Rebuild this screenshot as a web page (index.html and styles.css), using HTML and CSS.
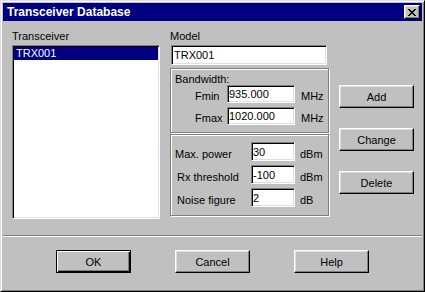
FILE: index.html
```html
<!DOCTYPE html>
<html lang="en">
<head>
    <meta charset="UTF-8">
    <meta name="viewport" content="width=device-width, initial-scale=1.0">
    <title>Transceiver Database</title>
    <link rel="stylesheet" href="styles.css">
</head>
<body>
    <div class="janela">
        <div class="titulo">
            <span>Transceiver Database</span>
            <button class="fechar">
                <svg width="8" height="7" viewBox="0 0 8 7" shape-rendering="crispEdges"><path d="M0 0h2v1H0zM6 0h2v1H6zM1 1h2v1H1zM5 1h2v1H5zM2 2h4v1H2zM3 3h2v1H3zM2 4h4v1H2zM1 5h2v1H1zM5 5h2v1H5zM0 6h2v1H0zM6 6h2v1H6z" fill="#000"/></svg>
            </button>
        </div>

        <div class="conteudo">
            <!-- lista da esquerda -->
            <div class="col-lista">
                <span class="rotulo">Transceiver</span>
                <ul class="lista">
                    <li class="selecionado">TRX001</li>
                </ul>
            </div>

            <!-- dados do modelo -->
            <div class="col-dados">
                <span class="rotulo">Model</span>
                <input type="text" class="campo modelo" value="TRX001">

                <div class="grupo banda">
                    <span class="titulo-grupo">Bandwidth:</span>
                    <div class="linha">
                        <span class="nome">Fmin</span>
                        <input type="text" class="campo" value="935.000">
                        <span class="unidade">MHz</span>
                    </div>
                    <div class="linha">
                        <span class="nome">Fmax</span>
                        <input type="text" class="campo" value="1020.000">
                        <span class="unidade">MHz</span>
                    </div>
                </div>

                <div class="grupo potencia">
                    <div class="linha">
                        <span class="nome">Max. power</span>
                        <input type="text" class="campo" value="30">
                        <span class="unidade">dBm</span>
                    </div>
                    <div class="linha">
                        <span class="nome recuo">Rx threshold</span>
                        <input type="text" class="campo" value="-100">
                        <span class="unidade">dBm</span>
                    </div>
                    <div class="linha">
                        <span class="nome recuo">Noise figure</span>
                        <input type="text" class="campo" value="2">
                        <span class="unidade">dB</span>
                    </div>
                </div>
            </div>

            <!-- botoes laterais -->
            <div class="col-botoes">
                <button class="botao">Add</button>
                <button class="botao">Change</button>
                <button class="botao">Delete</button>
            </div>
        </div>

        <div class="separador"></div>

        <div class="rodape">
            <button class="botao padrao">OK</button>
            <button class="botao">Cancel</button>
            <button class="botao">Help</button>
        </div>
    </div>
</body>
</html>
```

FILE: styles.css
```css
* {
    padding: 0;
    margin: 0;
    box-sizing: border-box;
    font-family: 'Liberation Sans', Arial, Helvetica, sans-serif;
}

body {
    background: #c0c0c0;
    font-size: 11px;
    color: #000;
}

/* Janela */
.janela {
    width: 425px;
    height: 292px;
    padding: 2px;
    background: #c0c0c0;
    border: 1px solid;
    border-color: #dfdfdf #000 #000 #dfdfdf;
    box-shadow: inset 1px 1px #fff, inset -1px -1px #808080;
}

.titulo {
    height: 18px;
    display: flex;
    align-items: center;
    justify-content: space-between;
    padding: 0 2px 0 4px;
    background: #000080;
    color: #fff;
}

.titulo span {
    font-size: 12px;
    font-weight: bold;
    line-height: 18px;
}

.fechar {
    width: 16px;
    height: 14px;
    display: flex;
    align-items: center;
    justify-content: center;
    background: #c0c0c0;
    border: 1px solid;
    border-color: #fff #000 #000 #fff;
    box-shadow: inset -1px -1px #808080, inset 1px 1px #dfdfdf;
}

/* Conteudo */
.conteudo {
    height: 214px;
    display: flex;
    padding: 9px 0 0 9px;
}

.rotulo {
    display: block;
    height: 15px;
    line-height: 13px;
}

.col-lista {
    width: 148px;
}

.lista {
    height: 174px;
    padding: 1px;
    list-style: none;
    background: #fff;
    border: 1px solid;
    border-color: #808080 #fff #fff #808080;
    box-shadow: inset 1px 1px #000, inset -1px -1px #dfdfdf;
}

.lista li {
    height: 13px;
    line-height: 13px;
    padding-left: 2px;
}

.lista .selecionado {
    background: #000080;
    color: #fff;
}

.col-dados {
    width: 159px;
    margin-left: 10px;
}

.campo {
    display: block;
    height: 18px;
    padding: 0 1px;
    font-size: 11px;
    background: #fff;
    border: 1px solid;
    border-color: #808080 #fff #fff #808080;
    box-shadow: inset 1px 1px #000, inset -1px -1px #dfdfdf;
    outline: none;
}

.campo.modelo {
    width: 156px;
    height: 20px;
    margin-left: 1px;
    padding: 0 2px;
}

/* Caixas de grupo */
.grupo {
    border: 1px solid #808080;
    box-shadow: inset 1px 1px #fff, 1px 1px #fff;
    padding: 4px 0 0 4px;
}

.banda {
    height: 65px;
    margin-top: 3px;
}

.potencia {
    height: 82px;
    margin-top: 1px;
    padding-top: 7px;
}

.titulo-grupo {
    display: block;
    height: 12px;
    line-height: 12px;
}

.linha {
    display: flex;
    align-items: flex-end;
    height: 18px;
}

.linha + .linha {
    margin-top: 4px;
}

.linha .nome,
.linha .unidade {
    line-height: 13px;
}

.banda .linha {
    padding-left: 20px;
}

.banda .nome {
    width: 32px;
}

.banda .campo {
    width: 68px;
}

.banda .unidade {
    margin-left: 6px;
}

.potencia .linha {
    height: 19px;
}

.potencia .nome {
    width: 76px;
}

.potencia .nome.recuo {
    padding-left: 2px;
}

.potencia .campo {
    width: 44px;
    height: 19px;
}

.potencia .unidade {
    margin-left: 5px;
}

/* Botoes */
.botao {
    width: 75px;
    height: 23px;
    font-size: 11px;
    color: #000;
    background: #c0c0c0;
    border: 1px solid;
    border-color: #fff #000 #000 #fff;
    box-shadow: inset -1px -1px #808080, inset 1px 1px #dfdfdf;
}

.botao.padrao {
    border-color: #000;
    box-shadow: inset 1px 1px #fff, inset -1px -1px #000, inset -2px -2px #808080;
}

.col-botoes {
    display: flex;
    flex-direction: column;
    gap: 20px;
    margin-left: 10px;
    padding-top: 55px;
}

.separador {
    height: 2px;
    border-top: 1px solid #808080;
    border-bottom: 1px solid #fff;
}

.rodape {
    display: flex;
    gap: 44px;
    padding: 13px 0 0 53px;
}
```
